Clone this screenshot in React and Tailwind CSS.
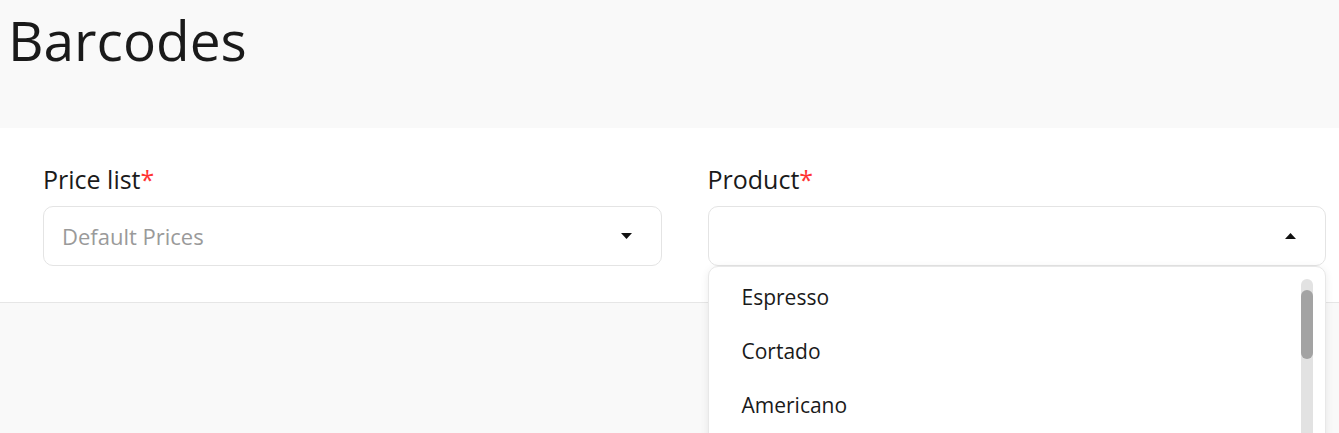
const items = ['Espresso', 'Cortado', 'Americano']

const Caret = ({ up }) => (
  <svg width="11" height="6" viewBox="0 0 11 6" className="shrink-0">
    {up ? <path d="M0 6 L5.5 0 L11 6 Z" fill="#111" /> : <path d="M0 0 L11 0 L5.5 6 Z" fill="#111" />}
  </svg>
)

export default function App() {
  return (
    <div className="h-[433px] bg-[#f9f9f9] overflow-hidden" style={{ fontFamily: '"Open Sans", "Noto Sans", sans-serif' }}>
      <div className="h-[128px] px-2 pt-[2px]">
        <h1 className="text-[55px] leading-[76px] text-[#1a1a1a]">Barcodes</h1>
      </div>
      <div className="bg-white border-b border-[#e6e6e6] pl-[43px] pr-[13px] pt-[34px] pb-[36px] flex gap-[46px]">
        <div className="flex-1">
          <label className="block text-[25px] leading-[34px] text-[#1a1a1a] mb-[10px]">
            Price list<span className="text-[#f33]">*</span>
          </label>
          <div className="h-[60px] rounded-[10px] border border-[#e4e4e4] flex items-center justify-between pl-[18px] pr-[29px]">
            <span className="text-[22px] text-[#9a9a9a]">Default Prices</span>
            <Caret />
          </div>
        </div>
        <div className="flex-1 relative">
          <label className="block text-[25px] leading-[34px] text-[#1a1a1a] mb-[10px]">
            Product<span className="text-[#f33]">*</span>
          </label>
          <div className="h-[60px] rounded-[10px] border border-[#e4e4e4] flex items-center justify-end pr-[29px]">
            <Caret up />
          </div>
          <div className="absolute left-0 right-0 top-[104px] h-[200px] bg-white rounded-[10px] border border-[#e8e8e8] shadow-[0_2px_8px_rgba(0,0,0,0.08)] flex z-10">
            <ul className="flex-1 pt-[4px]">
              {items.map((it) => (
                <li key={it} className="h-[54px] flex items-center pl-[33px] text-[21px] text-[#1a1a1a]">{it}</li>
              ))}
            </ul>
            <div className="w-[12px] mr-[12px] mt-[12px] bg-[#e2e2e2] rounded-full relative">
              <div className="absolute left-0 right-0 top-[11px] h-[69px] bg-[#a3a3a3] rounded-full" />
            </div>
          </div>
        </div>
      </div>
    </div>
  )
}
